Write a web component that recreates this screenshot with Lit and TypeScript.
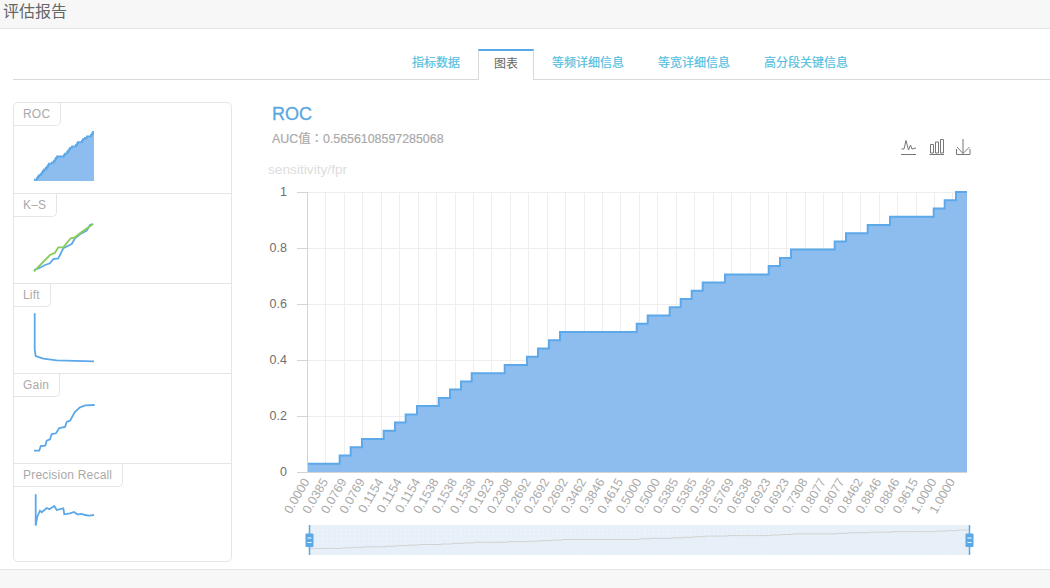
import { LitElement, html, css, svg } from "lit";
import { customElement } from "lit/decorators.js";

const STEP_X = [339.7, 350.7, 362, 383.7, 395, 405.7, 417, 438.7, 450, 461, 471.7, 504.7, 527, 538, 549, 560, 636.7, 647.7, 669.7, 680.7, 691.7, 702.7, 725, 768.7, 780, 791, 834.7, 846, 867.7, 890, 933.7, 944.7, 956];
const LEFT = 307.5, RIGHT = 967, TOP = 192, BOTTOM = 472;
const UNIT = (BOTTOM - TOP) / 34;
const TICK = 18.44;

// Stair outline in page coordinates
function stairs(): [number, number][] {
  const pts: [number, number][] = [[LEFT, BOTTOM - UNIT]];
  STEP_X.forEach((x, i) => {
    pts.push([x, BOTTOM - UNIT * (i + 1)]);
    pts.push([x, BOTTOM - UNIT * (i + 2)]);
  });
  pts.push([RIGHT, TOP]);
  return pts;
}
const toStr = (p: [number, number][]) => p.map(([x, y]) => `${x.toFixed(1)},${y.toFixed(1)}`).join(" ");
const STAIRS = stairs();
const mapped = (x0: number, x1: number, y0: number, y1: number) =>
  STAIRS.map(([x, y]) => [
    x0 + ((x - LEFT) / (RIGHT - LEFT)) * (x1 - x0),
    y0 + ((BOTTOM - y) / (BOTTOM - TOP)) * (y1 - y0),
  ] as [number, number]);

const zoomPts = (raw: number[][], oy: number) => raw.map(([x, y]) => [x / 3, y / 3 + oy] as [number, number]);

const X_LABELS = "0.0000 0.0385 0.0769 0.0769 0.1154 0.1154 0.1154 0.1538 0.1538 0.1538 0.1923 0.2308 0.2692 0.2692 0.2692 0.3462 0.3846 0.4615 0.5000 0.5000 0.5385 0.5385 0.5385 0.5769 0.6538 0.6923 0.6923 0.7308 0.8077 0.8077 0.8462 0.8846 0.8846 0.9615 1.0000 1.0000".split(" ");
const Y_LABELS = ["0", "0.2", "0.4", "0.6", "0.8", "1"];

const rocSpark = mapped(34, 94, 181, 132);
const SPARKS = [
  {
    label: "ROC", top: 126,
    body: svg`<polygon class="area" points="34,181 ${toStr(rocSpark)} 94,181"></polygon><polyline class="s" points=${toStr(rocSpark)}></polyline>`,
  },
  {
    label: "K–S", top: 217,
    body: svg`<polyline class="s" points=${toStr(zoomPts([[102,510],[120,503],[135,495],[150,490],[160,477],[175,475],[190,445],[215,432],[225,415],[240,403],[260,392],[270,375],[280,372]], 100))}></polyline>
      <polyline class="g" points=${toStr(zoomPts([[102,514],[150,465],[165,458],[175,442],[190,442],[212,415],[225,412],[240,400],[278,373]], 100))}></polyline>`,
  },
  {
    label: "Lift", top: 307,
    body: svg`<polyline class="s" points=${toStr(zoomPts([[104,100],[104,210],[107,228],[130,236],[170,241],[282,244]], 280))}></polyline>`,
  },
  {
    label: "Gain", top: 397,
    body: svg`<polyline class="s" points=${toStr(zoomPts([[102,512],[118,512],[122,498],[136,497],[140,482],[150,478],[155,462],[168,460],[178,444],[195,441],[200,426],[210,422],[225,395],[240,382],[256,376],[284,375]], 280))}></polyline>`,
  },
  {
    label: "Precision Recall", top: 487,
    body: svg`<polyline class="s" points=${toStr(zoomPts([[107,643],[107,737],[112,710],[120,692],[125,697],[140,684],[148,688],[163,678],[170,690],[190,685],[193,703],[210,700],[222,696],[232,703],[245,702],[255,705],[268,707],[282,705]], 280))}></polyline>`,
  },
];

@customElement("app-root")
export class AppRoot extends LitElement {
  static styles = css`
    :host {
      display: flex;
      flex-direction: column;
      width: 1050px;
      height: 588px;
      overflow: hidden;
      background: #fff;
      font-family: "Liberation Sans", "Noto Sans CJK SC", sans-serif;
    }
    .header {
      height: 28px;
      flex: none;
      background: #f7f7f7;
      border-bottom: 1px solid #e5e5e5;
      padding-left: 3px;
      font-size: 16px;
      line-height: 23px;
      color: #666;
    }
    .main { flex: 1; padding-left: 13px; min-height: 0; }
    .tabs {
      display: flex;
      margin-top: 20px;
      height: 31px;
      box-sizing: border-box;
      padding-left: 383px;
      border-bottom: 1px solid #d9d9d9;
    }
    .tab {
      padding: 0 16px;
      margin-right: 2px;
      font-size: 12px;
      line-height: 29px;
      color: #55bfe0;
      -webkit-text-stroke: 0.2px #55bfe0;
    }
    .tab.on {
      height: 31px;
      box-sizing: border-box;
      margin-right: 2px;
      padding: 0 15px;
      background: #fff;
      color: #666;
      -webkit-text-stroke: 0;
      border-top: 2px solid #5aa7e8;
      border-left: 1px solid #d9d9d9;
      border-right: 1px solid #d9d9d9;
      line-height: 27px;
    }
    .body { display: flex; margin-top: 22px; }
    .panel {
      flex: none;
      width: 219px;
      height: 460px;
      box-sizing: border-box;
      border: 1px solid #e5e5e5;
      border-radius: 5px;
      display: flex;
      flex-direction: column;
    }
    .row { height: 90px; flex: none; border-bottom: 1px solid #e5e5e5; box-sizing: border-box; }
    .row:first-child { height: 91px; }
    .row:last-child { border-bottom: 0; flex: 1; }
    .tag {
      display: inline-block;
      vertical-align: top;
      height: 23px;
      box-sizing: border-box;
      padding: 0 10px 0 9px;
      border-right: 1px solid #e5e5e5;
      border-bottom: 1px solid #e5e5e5;
      border-bottom-right-radius: 5px;
      font-size: 12px;
      letter-spacing: 0.2px;
      line-height: 22px;
      color: #aaa;
    }
    .spark { display: block; width: 100px; height: 60px; }
    .spark .area { fill: #8dbdee; stroke: none; }
    .spark .s { fill: none; stroke: #5ca8e8; stroke-width: 1.8; }
    .spark .g { fill: none; stroke: #86cc55; stroke-width: 1.8; }
    .content { flex: 1; margin-left: 40px; min-width: 0; }
    .head {
      display: flex;
      justify-content: space-between;
      align-items: flex-end;
      height: 53px;
      padding-right: 78px;
    }
    .title { font-size: 18px; line-height: 24px; color: #5aa7e2; -webkit-text-stroke: 0.3px #5aa7e2; }
    .auc {
      font-family: "Liberation Sans", "Noto Sans CJK TC", sans-serif;
      font-size: 12.4px;
      line-height: 18px;
      margin: 4px 0 7px;
      color: #aaa;
      -webkit-text-stroke: 0.2px #aaa;
    }
    .icons { display: block; width: 72px; height: 17px; flex: none; }
    .chart { display: block; width: 720px; height: 405px; margin-left: -10px; }
    .grid { stroke: #eee; stroke-width: 1; }
    .axis { stroke: #d4d4d4; stroke-width: 1; }
    .ytext { font-size: 12.5px; fill: #707070; text-anchor: end; }
    .xtext { font-size: 12.5px; fill: #aaa; text-anchor: end; }
    .unit { font-size: 13.7px; fill: #ddd; }
    .fill { fill: #8dbdee; }
    .line { fill: none; stroke: #5ca8e8; stroke-width: 2; }
    .ico { fill: none; stroke: #777; stroke-width: 1; }
    .zoombg { fill: #e7f0f8; }
    .zoomline { fill: none; stroke: #d2d2d2; stroke-width: 1; }
    .handle { fill: #5aa9e6; }
    .handle-line { stroke: #5aa9e6; stroke-width: 1.5; }
    .handle-mark { stroke: #fff; stroke-width: 1; }
    .footer {
      height: 19px;
      flex: none;
      box-sizing: border-box;
      background: #f7f7f7;
      border-top: 1px solid #e5e5e5;
    }
  `;

  private chart() {
    const xs = X_LABELS.map((_, i) => LEFT + i * TICK);
    const zoom = mapped(310, 969, 549, 530);
    return html`
      <svg class="chart" viewBox="262 155 720 405" xmlns="http://www.w3.org/2000/svg">
        <defs>
          <pattern id="dotsA" width="4.6" height="4.6" patternUnits="userSpaceOnUse">
            <rect width="1" height="1" fill="#fff" fill-opacity="0.7"></rect>
          </pattern>
          <pattern id="dotsB" width="4.6" height="4.6" patternUnits="userSpaceOnUse">
            <rect width="1" height="1" fill="#cfd6dd" fill-opacity="0.5"></rect>
          </pattern>
        </defs>
        <text class="unit" x="268" y="174">sensitivity/fpr</text>

        ${xs.map((x) => svg`<line class="grid" x1=${Math.floor(x) + 0.5} x2=${Math.floor(x) + 0.5} y1=${TOP} y2=${BOTTOM}></line>`)}
        ${Y_LABELS.map((l, i) => {
          const y = BOTTOM - i * 56;
          return svg`
            <line class="grid" x1=${LEFT} x2=${RIGHT} y1=${y + 0.5} y2=${y + 0.5}></line>
            <line class="axis" x1="297" x2=${LEFT} y1=${y + 0.5} y2=${y + 0.5}></line>
            <text class="ytext" x="287" y=${y + 3.5}>${l}</text>`;
        })}
        <polygon class="fill" points="${LEFT},${BOTTOM} ${toStr(STAIRS)} ${RIGHT},${BOTTOM}"></polygon>
        <polyline class="line" points=${toStr(STAIRS)}></polyline>
        <line class="axis" x1=${LEFT} x2=${LEFT} y1=${TOP} y2=${BOTTOM}></line>
        <line class="axis" x1=${LEFT} x2=${RIGHT} y1=${BOTTOM + 0.5} y2=${BOTTOM + 0.5}></line>
        ${X_LABELS.map((l, i) => svg`
          <text class="xtext" transform="translate(${xs[i] + 2.5} ${BOTTOM + 9.5}) rotate(-60)">${l}</text>`)}

        <rect class="zoombg" x="309" y="525" width="661" height="30"></rect>
        <rect x="309" y="525" width="661" height="30" fill="url(#dotsA)"></rect>
        <polygon fill="url(#dotsB)" points="310,555 ${toStr(zoom)} 969,555"></polygon>
        <polyline class="zoomline" points=${toStr(zoom)}></polyline>
        ${[309.5, 969.5].map((x) => svg`
          <line class="handle-line" x1=${x} x2=${x} y1="525" y2="555"></line>
          <rect class="handle" x=${x - 4} y="533.500" width="8" height="13.500" rx="1"></rect>
          <line class="handle-mark" x1=${x - 2} x2=${x + 2} y1="538" y2="538"></line>
          <line class="handle-mark" x1=${x - 2} x2=${x + 2} y1="542.500" y2="542.500"></line>`)}
      </svg>
    `;
  }

  render() {
    return html`
      <div class="header">评估报告</div>
      <div class="main">
        <div class="tabs">
          <div class="tab">指标数据</div>
          <div class="tab on">图表</div>
          <div class="tab">等频详细信息</div>
          <div class="tab">等宽详细信息</div>
          <div class="tab">高分段关键信息</div>
        </div>
        <div class="body">
          <div class="panel">
            ${SPARKS.map((s) => html`
              <div class="row">
                <div class="tag">${s.label}</div>
                <svg class="spark" viewBox="14 ${s.top} 100 60" xmlns="http://www.w3.org/2000/svg">${s.body}</svg>
              </div>`)}
          </div>
          <div class="content">
            <div class="head">
              <div>
                <div class="title">ROC</div>
                <div class="auc">AUC值：0.5656108597285068</div>
              </div>
              <svg class="icons" viewBox="900 138 72 17" xmlns="http://www.w3.org/2000/svg">
                <polyline class="ico" points="901.5,149 904,149 906,140.5 908.5,150 910.5,145 912,149 916,148"></polyline>
                <path class="ico" d="M901 154.500H916"></path>
                <path class="ico" d="M929.500 154.500H944M930.500 144.500h3v8.500h-3zM935.500 142h3v11h-3zM940.500 139.500h3v13.500h-3z"></path>
                <path class="ico" d="M963 139v14.500M957 147l6 6.500 6.500-6.500M956.500 149v5.500h13.500v-5.500"></path>
              </svg>
            </div>
            ${this.chart()}
          </div>
        </div>
      </div>
      <div class="footer"></div>
    `;
  }
}
